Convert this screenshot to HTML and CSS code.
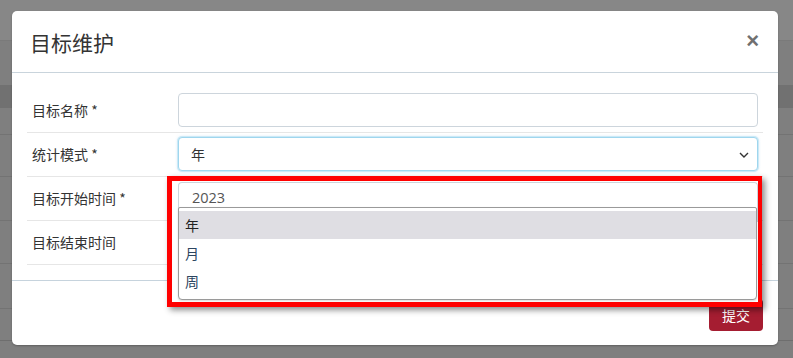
FILE: index.html
```html
<!DOCTYPE html>
<html lang="zh">
<head>
<meta charset="utf-8">
<title>目标维护</title>
<link rel="stylesheet" href="styles.css">
</head>
<body>
<div class="modal">
  <div class="modal-header">
    <h4 class="modal-title">目标维护</h4>
    <span class="close">&times;</span>
  </div>
  <div class="modal-body">
    <div class="row">
      <label class="label">目标名称 *</label>
      <div class="control"><div class="input"></div></div>
    </div>
    <div class="row">
      <label class="label">统计模式 *</label>
      <div class="control">
        <div class="input select focus">
          <span>年</span>
          <svg class="chev" width="10" height="6" viewBox="0 0 10 6"><path d="M1 1 L5 5 L9 1" fill="none" stroke="#333" stroke-width="1.4"/></svg>
        </div>
      </div>
    </div>
    <div class="row">
      <label class="label">目标开始时间 *</label>
      <div class="control"><div class="input"></div></div>
    </div>
    <div class="row">
      <label class="label">目标结束时间</label>
      <div class="control"><div class="input"></div></div>
    </div>
  </div>
  <div class="modal-footer">
    <button class="btn-submit">提交</button>
  </div>
  <div class="highlight">
    <div class="hl-input">2023</div>
    <ul class="dropdown">
      <li class="active">年</li>
      <li>月</li>
      <li>周</li>
    </ul>
  </div>
</div>
</body>
</html>
```
FILE: styles.css
```css
html, body {
  margin: 0;
  padding: 0;
}
body {
  width: 793px;
  height: 358px;
  overflow: hidden;
  padding: 11px 0 0 12px;
  box-sizing: border-box;
  font-family: "Noto Sans CJK SC", "Noto Sans", sans-serif;
  background:
    linear-gradient(to bottom,
      #878787 0, #878787 40px,
      #7a7a7a 40px, #7a7a7a 41px,
      #7f7f7f 41px, #7f7f7f 85px,
      #717171 85px, #717171 108px,
      #7f7f7f 108px, #7f7f7f 134px,
      #737373 134px, #737373 135px,
      #7f7f7f 135px, #7f7f7f 176px,
      #737373 176px, #737373 177px,
      #7f7f7f 177px, #7f7f7f 220px,
      #737373 220px, #737373 221px,
      #7f7f7f 221px, #7f7f7f 263px,
      #737373 263px, #737373 264px,
      #7f7f7f 264px, #7f7f7f 308px,
      #737373 308px, #737373 309px,
      #7f7f7f 309px, #7f7f7f 340px,
      #6e6e6e 340px, #6e6e6e 341px,
      #7f7f7f 341px);
}
.modal {
  position: relative;
  width: 766px;
  height: 334px;
  background: #fff;
  border-radius: 5px;
  box-shadow: 0 1px 2px rgba(0,0,0,0.25);
  color: #333;
}
.modal-header {
  height: 61px;
  border-bottom: 1px solid #c9d4dc;
  display: flex;
  align-items: center;
  justify-content: space-between;
  padding: 0 18px 0 18px;
}
.modal-title {
  margin: 0;
  font-size: 21px;
  font-weight: 400;
  color: #333;
  line-height: 1;
  padding-top: 1px;
}
.close {
  font-family: "Liberation Sans", Arial, sans-serif;
  font-size: 22px;
  font-weight: 700;
  color: #707070;
  line-height: 1;
  padding: 0 1px 1px 0;
}
.modal-body {
  padding: 16px 15px 15px;
}
.row {
  display: flex;
  align-items: flex-start;
  height: 44px;
  box-sizing: border-box;
  padding-top: 4px;
  border-bottom: 1px solid #e6e6e6;
}
.label {
  width: 146px;
  padding-left: 5px;
  height: 34px;
  display: flex;
  align-items: center;
  font-size: 14px;
  color: #333;
}
.control {
  flex: 1;
  padding-right: 5px;
}
.input {
  height: 34px;
  box-sizing: border-box;
  border: 1px solid #cdd5dc;
  border-radius: 4px;
  background: #fff;
}
.select {
  display: flex;
  align-items: center;
  justify-content: space-between;
  padding: 0 8px 0 12px;
  font-size: 14px;
  color: #333;
}
.focus {
  border-color: #9fd6ee;
  box-shadow: 0 0 0 1px #cbe9f6, 0 0 3px rgba(102,175,233,0.5);
}
.chev {
  display: block;
  margin-top: 1px;
}
.modal-footer {
  border-top: 1px solid #c6d3dd;
  padding: 18px 15px 0;
  display: flex;
  justify-content: flex-end;
}
.btn-submit {
  width: 54px;
  height: 32px;
  border: none;
  border-radius: 4px;
  background: #a51d31;
  color: #fff;
  font-family: "Noto Sans CJK SC", sans-serif;
  font-size: 14px;
  padding: 0;
}
.highlight {
  position: absolute;
  left: 155px;
  top: 165px;
  width: 595px;
  height: 131px;
  box-sizing: border-box;
  border: 5px solid #ff0000;
  border-right-width: 4px;
  background: #fff;
  box-shadow: 3px 3px 6px rgba(0,0,0,0.45);
  padding: 1px 0 0 6px;
}
.hl-input {
  height: 40px;
  width: 580px;
  box-sizing: border-box;
  border: 1px solid #cdd5dc;
  border-bottom: none;
  border-radius: 4px 4px 0 0;
  padding: 5px 0 0 13px;
  font-family: "Open Sans", "Noto Sans", sans-serif;
  font-size: 14.5px;
  color: #555;
}
.dropdown {
  position: absolute;
  left: 6px;
  top: 26px;
  width: 579px;
  height: 93px;
  box-sizing: border-box;
  margin: 0;
  padding: 3px 0 0;
  list-style: none;
  background: #fff;
  border: 1px solid #9a9a9a;
  border-radius: 2px 2px 4px 4px;
  box-shadow: 0 1px 2px rgba(0,0,0,0.15);
}
.dropdown li {
  height: 28px;
  display: flex;
  align-items: center;
  padding-left: 6px;
  font-size: 14px;
  color: #2c4560;
}
.dropdown li.active {
  background: #dfdee3;
  color: #222;
}
```
